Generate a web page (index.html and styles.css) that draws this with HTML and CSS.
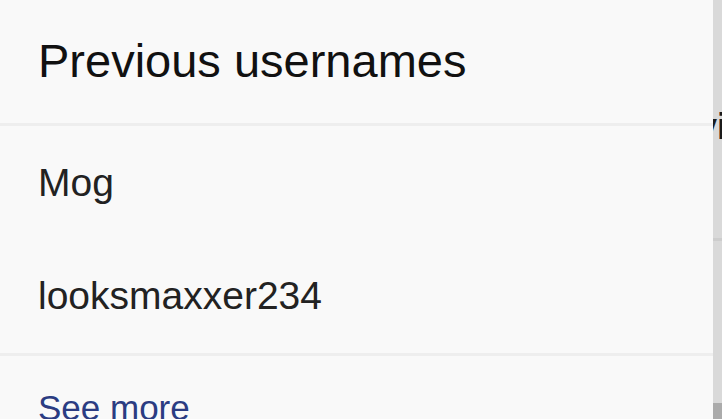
FILE: index.html
```
<!DOCTYPE html>
<html>
<head>
	<meta charset="utf-8">
	<link rel="stylesheet" href="styles.css">
</head>
<body>
	<div class="page">
		<div class="page-title">views</div>
		<div class="page-rule"></div>
		<div class="page-bar"></div>
	</div>
	<div class="sheet">
		<header class="sheet-head">Previous usernames</header>
		<ul class="names">
			<li class="name">Mog</li>
			<li class="name">looksmaxxer234</li>
		</ul>
		<a class="more" href="#">See more</a>
	</div>
</body>
</html>
```

FILE: styles.css
```
html, body {
	margin: 0;
	height: 100%;
	overflow: hidden;
}
body {
	font-family: "Liberation Sans", Arial, sans-serif;
	background: #d9d9d9;
	position: relative;
}

/* page behind the sheet, dimmed */
.page {
	height: 100%;
	display: flex;
	flex-direction: column;
}
.page-title {
	margin: 102px 0 0 697px;
	font-size: 36px;
	font-weight: bold;
	line-height: 50px;
	color: #1b1b1b;
	white-space: nowrap;
}
.page-rule {
	margin-top: 86px;
	height: 3px;
	background: #cdcdcd;
}
.page-bar {
	margin-top: auto;
	height: 16px;
	background: #ababab;
}

/* the sheet itself */
.sheet {
	position: absolute;
	left: 0;
	top: 0;
	width: 713px;
	height: 100%;
	background: #f9f9f9;
	color: #111;
}
.sheet-head {
	height: 126px;
	box-sizing: border-box;
	padding: 29px 0 0 38px;
	font-size: 47px;
	line-height: 64px;
	border-bottom: 3px solid #eeeeee;
}
.names {
	list-style: none;
	margin: 0;
	padding: 0;
	border-bottom: 3px solid #eeeeee;
}
.name {
	height: 113px;
	box-sizing: border-box;
	padding: 35px 0 0 38px;
	font-size: 39px;
	line-height: 44px;
	color: #222;
}
.name:last-child {
	height: 114px;
}
.more {
	display: block;
	padding: 30px 0 0 38px;
	font-size: 35px;
	line-height: 44px;
	color: #2b3c82;
	text-decoration: none;
}
```
